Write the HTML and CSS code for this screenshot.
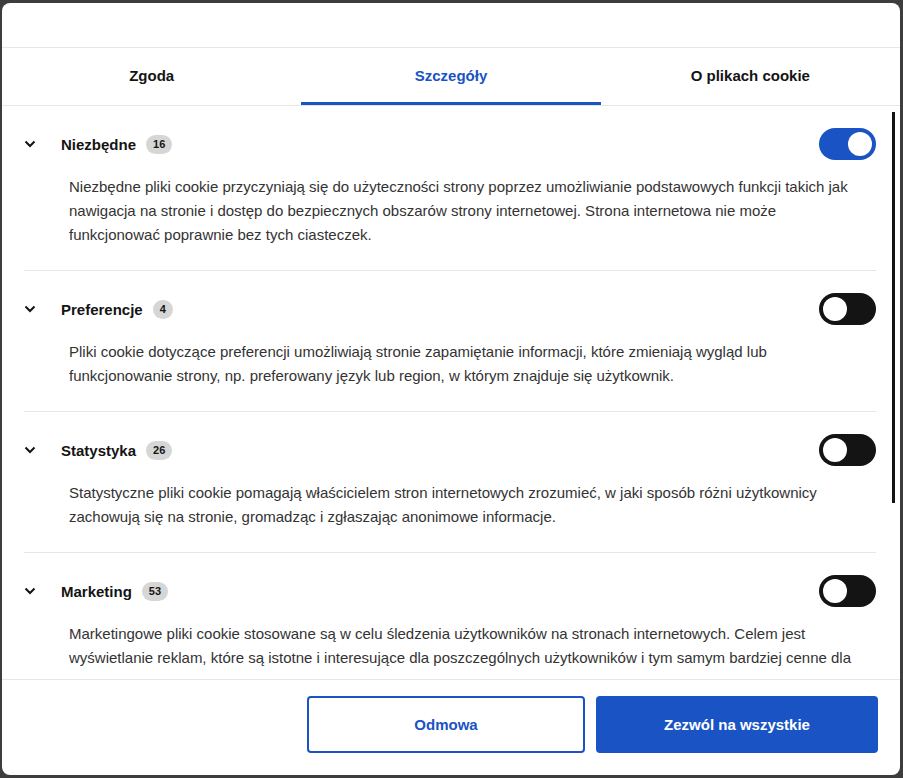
FILE: index.html
```html
<!DOCTYPE html>
<html lang="pl">
<head>
  <meta charset="UTF-8">
  <meta name="viewport" content="width=device-width, initial-scale=1.0">
  <title>Ustawienia cookie</title>
  <link rel="stylesheet" href="styles.css">
</head>
<body>

  <div class="dialog">
    <div class="dialog-header"></div>

    <div class="tabs">
      <button class="tab">Zgoda</button>
      <button class="tab active">Szczegóły</button>
      <button class="tab">O plikach cookie</button>
    </div>

    <div class="content-wrap">
      <div class="content">
        <div class="category">
          <div class="category-head">
            <svg class="chevron" width="12" height="8" viewBox="0 0 12 8"><path d="M1.5 1.5 L6 6 L10.5 1.5" /></svg>
            <span class="category-title">Niezbędne</span>
            <span class="badge">16</span>
            <span class="toggle on"><span class="knob"></span></span>
          </div>
          <p class="category-text">Niezbędne pliki cookie przyczyniają się do użyteczności strony poprzez umożliwianie podstawowych funkcji takich jak nawigacja na stronie i dostęp do bezpiecznych obszarów strony internetowej. Strona internetowa nie może funkcjonować poprawnie bez tych ciasteczek.</p>
        </div>

        <div class="category">
          <div class="category-head">
            <svg class="chevron" width="12" height="8" viewBox="0 0 12 8"><path d="M1.5 1.5 L6 6 L10.5 1.5" /></svg>
            <span class="category-title">Preferencje</span>
            <span class="badge">4</span>
            <span class="toggle"><span class="knob"></span></span>
          </div>
          <p class="category-text">Pliki cookie dotyczące preferencji umożliwiają stronie zapamiętanie informacji, które zmieniają wygląd lub funkcjonowanie strony, np. preferowany język lub region, w którym znajduje się użytkownik.</p>
        </div>

        <div class="category">
          <div class="category-head">
            <svg class="chevron" width="12" height="8" viewBox="0 0 12 8"><path d="M1.5 1.5 L6 6 L10.5 1.5" /></svg>
            <span class="category-title">Statystyka</span>
            <span class="badge">26</span>
            <span class="toggle"><span class="knob"></span></span>
          </div>
          <p class="category-text">Statystyczne pliki cookie pomagają właścicielem stron internetowych zrozumieć, w jaki sposób różni użytkownicy zachowują się na stronie, gromadząc i zgłaszając anonimowe informacje.</p>
        </div>

        <div class="category">
          <div class="category-head">
            <svg class="chevron" width="12" height="8" viewBox="0 0 12 8"><path d="M1.5 1.5 L6 6 L10.5 1.5" /></svg>
            <span class="category-title">Marketing</span>
            <span class="badge">53</span>
            <span class="toggle"><span class="knob"></span></span>
          </div>
          <p class="category-text">Marketingowe pliki cookie stosowane są w celu śledzenia użytkowników na stronach internetowych. Celem jest wyświetlanie reklam, które są istotne i interesujące dla poszczególnych użytkowników i tym samym bardziej cenne dla wydawców i reklamodawców stron trzecich.</p>
        </div>
      </div>
      <div class="scroll-thumb"></div>
    </div>

    <div class="footer">
      <button class="btn btn-decline">Odmowa</button>
      <button class="btn btn-allow">Zezwól na wszystkie</button>
    </div>
  </div>

</body>
</html>
```

FILE: styles.css
```css
body {
  margin: 0;
  background-color: #3d3d3d;
  font-family: 'Liberation Sans', Arial, sans-serif;
  color: #141414;
}
.dialog {
  width: 898px;
  height: 772px;
  margin: 3px 3px 3px 2px;
  background-color: #ffffff;
  border-radius: 8px;
  display: flex;
  flex-direction: column;
  overflow: hidden;
}
.dialog-header {
  height: 44px;
  flex-shrink: 0;
  border-bottom: 1px solid #e6e6e6;
}
.tabs {
  display: flex;
  flex-shrink: 0;
  border-bottom: 1px solid #e6e6e6;
}
.tab {
  flex: 1;
  height: 57px;
  padding: 0;
  background: none;
  border: none;
  border-bottom: 3px solid transparent;
  font-family: inherit;
  font-size: 15px;
  font-weight: bold;
  color: #141414;
  cursor: pointer;
}
.tab.active {
  color: #1953c4;
  border-bottom-color: #1953c4;
}
.content-wrap {
  flex: 1;
  min-height: 0;
  position: relative;
}
.content-wrap::after {
  content: '';
  position: absolute;
  left: 0;
  right: 0;
  bottom: 0;
  height: 10px;
  background: linear-gradient(rgba(255, 255, 255, 0), #ffffff 60%);
}
.content {
  height: 100%;
  overflow: hidden;
  padding: 0 24px 0 22px;
  box-sizing: border-box;
}
.scroll-thumb {
  position: absolute;
  top: 6px;
  right: 5px;
  width: 3px;
  height: 391px;
  background-color: #141414;
}
.category {
  padding: 22px 0 23px;
  border-bottom: 1px solid #e6e6e6;
}
.category:last-child {
  border-bottom: none;
}
.category-head {
  display: flex;
  align-items: center;
  height: 32px;
}
.chevron {
  flex-shrink: 0;
}
.chevron path {
  fill: none;
  stroke: #141414;
  stroke-width: 2;
}
.category-title {
  margin-left: 25px;
  font-size: 15px;
  font-weight: bold;
}
.badge {
  margin-left: 10px;
  min-width: 19px;
  height: 19px;
  padding: 0 7px;
  box-sizing: border-box;
  border-radius: 10px;
  background-color: #d6d6d6;
  font-size: 11px;
  font-weight: bold;
  line-height: 19px;
  text-align: center;
}
.toggle {
  margin-left: auto;
  width: 57px;
  height: 32px;
  border-radius: 16px;
  background-color: #141414;
  display: flex;
  align-items: center;
  padding: 0 4px;
  box-sizing: border-box;
}
.toggle.on {
  background-color: #1953c4;
  justify-content: flex-end;
}
.knob {
  width: 24px;
  height: 24px;
  border-radius: 50%;
  background-color: #ffffff;
}
.category-text {
  margin: 15px 0 0;
  padding: 0 14px 0 45px;
  font-size: 15px;
  line-height: 24px;
  color: #333333;
}
.footer {
  flex-shrink: 0;
  display: flex;
  justify-content: flex-end;
  gap: 11px;
  padding: 16px 22px 22px;
  border-top: 1px solid #e6e6e6;
}
.btn {
  height: 57px;
  border-radius: 4px;
  font-family: inherit;
  font-size: 15px;
  font-weight: bold;
  cursor: pointer;
}
.btn-decline {
  width: 278px;
  background-color: #ffffff;
  border: 2px solid #1953c4;
  color: #1953c4;
}
.btn-allow {
  width: 282px;
  background-color: #1953c4;
  border: 2px solid #1953c4;
  color: #ffffff;
}
```
